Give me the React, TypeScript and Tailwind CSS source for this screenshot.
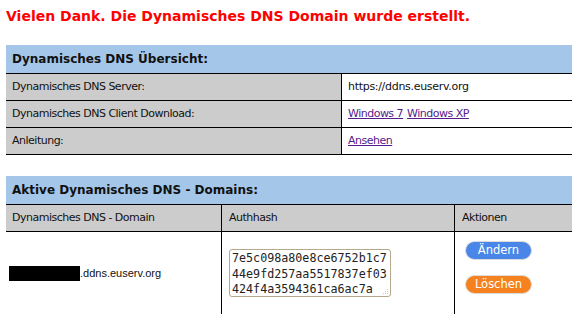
export default function App() {
  const hashLines = ["7e5c098a80e8ce6752b1c7", "44e9fd257aa5517837ef03", "424f4a3594361ca6ac7a"];
  return (
    <div className="w-[572px] h-[314px] overflow-hidden bg-white pl-[6px] font-['DejaVu_Sans',sans-serif] text-[#111]">
      <div className="h-[45px] pt-[8px]">
        <h1 className="text-[14px] leading-[17px] font-bold text-[#ff0000] whitespace-nowrap">
          Vielen Dank. Die Dynamisches DNS Domain wurde erstellt.
        </h1>
      </div>

      {/* Table 1 */}
      <div>
        <div className="h-[29px] bg-[#a4c6e8] border-b border-black flex items-center px-[6px] text-[12px] font-bold">
          Dynamisches DNS Übersicht:
        </div>
        <div className="grid grid-cols-[336px_1fr] h-[27px] border-b border-black text-[11px] tracking-[-0.5px]">
          <div className="bg-[#cccccc] border-r border-black flex items-center px-[6px]">Dynamisches DNS Server:</div>
          <div className="flex items-center px-[6px] tracking-[-0.3px]">https://ddns.euserv.org</div>
        </div>
        <div className="grid grid-cols-[336px_1fr] h-[27px] border-b border-black text-[11px] tracking-[-0.5px]">
          <div className="bg-[#cccccc] border-r border-black flex items-center px-[6px]">Dynamisches DNS Client Download:</div>
          <div className="flex items-center px-[6px] gap-[4px] text-[#551a8b]">
            <a className="underline">Windows 7</a>
            <a className="underline">Windows XP</a>
          </div>
        </div>
        <div className="grid grid-cols-[336px_1fr] h-[27px] border-b border-black text-[11px] tracking-[-0.5px]">
          <div className="bg-[#cccccc] border-r border-black flex items-center px-[6px]">Anleitung:</div>
          <div className="flex items-center px-[6px] text-[#551a8b]">
            <a className="underline">Ansehen</a>
          </div>
        </div>
      </div>

      {/* Table 2 */}
      <div className="mt-[21px]">
        <div className="h-[29px] bg-[#a4c6e8] border-b border-black flex items-center px-[6px] text-[12px] font-bold">
          Aktive Dynamisches DNS - Domains:
        </div>
        <div className="grid grid-cols-[216px_233px_1fr] h-[27px] border-b border-black bg-[#cccccc] text-[11px] tracking-[-0.5px]">
          <div className="border-r border-black flex items-center px-[6px]">Dynamisches DNS - Domain</div>
          <div className="border-r border-black flex items-center px-[7px]">Authhash</div>
          <div className="flex items-center px-[7px]">Aktionen</div>
        </div>
        <div className="grid grid-cols-[216px_233px_1fr] h-[82px] text-[11px]">
          <div className="border-r border-black flex items-center pl-[3px]">
            <span className="inline-block w-[71px] h-[15px] bg-black" />
            <span className="font-['Liberation_Sans',Arial,sans-serif] text-[11px]">.ddns.euserv.org</span>
          </div>
          <div className="border-r border-black flex items-center pl-[7px]">
            <div className="relative w-[162px] h-[48px] border border-[#b6a88a] rounded-[3px] pl-[2px] pt-[1px] font-['DejaVu_Sans_Mono',monospace] text-[11.7px] leading-[15.5px] text-[#222]">
              {hashLines.map((l) => (
                <div key={l} className="whitespace-nowrap">{l}</div>
              ))}
              <svg className="absolute right-[1px] bottom-[1px]" width="8" height="8" viewBox="0 0 8 8">
                <rect x="6" y="2" width="1" height="1" fill="#c8c8c8" />
                <rect x="4" y="4" width="1" height="1" fill="#c8c8c8" />
                <rect x="6" y="4" width="1" height="1" fill="#c8c8c8" />
                <rect x="2" y="6" width="1" height="1" fill="#c8c8c8" />
                <rect x="4" y="6" width="1" height="1" fill="#c8c8c8" />
                <rect x="6" y="6" width="1" height="1" fill="#c8c8c8" />
              </svg>
            </div>
          </div>
          <div className="flex flex-col items-start pl-[10px] pt-[9px] gap-[15px]">
            <div className="w-[67px] h-[19px] rounded-full border border-[#dcdcdc] bg-[#4a86e8] text-white flex items-center justify-center text-[11.5px]">
              Ändern
            </div>
            <div className="w-[67px] h-[19px] rounded-full border border-[#dcdcdc] bg-[#f5821f] text-white flex items-center justify-center text-[11.5px]">
              Löschen
            </div>
          </div>
        </div>
      </div>
    </div>
  );
}
